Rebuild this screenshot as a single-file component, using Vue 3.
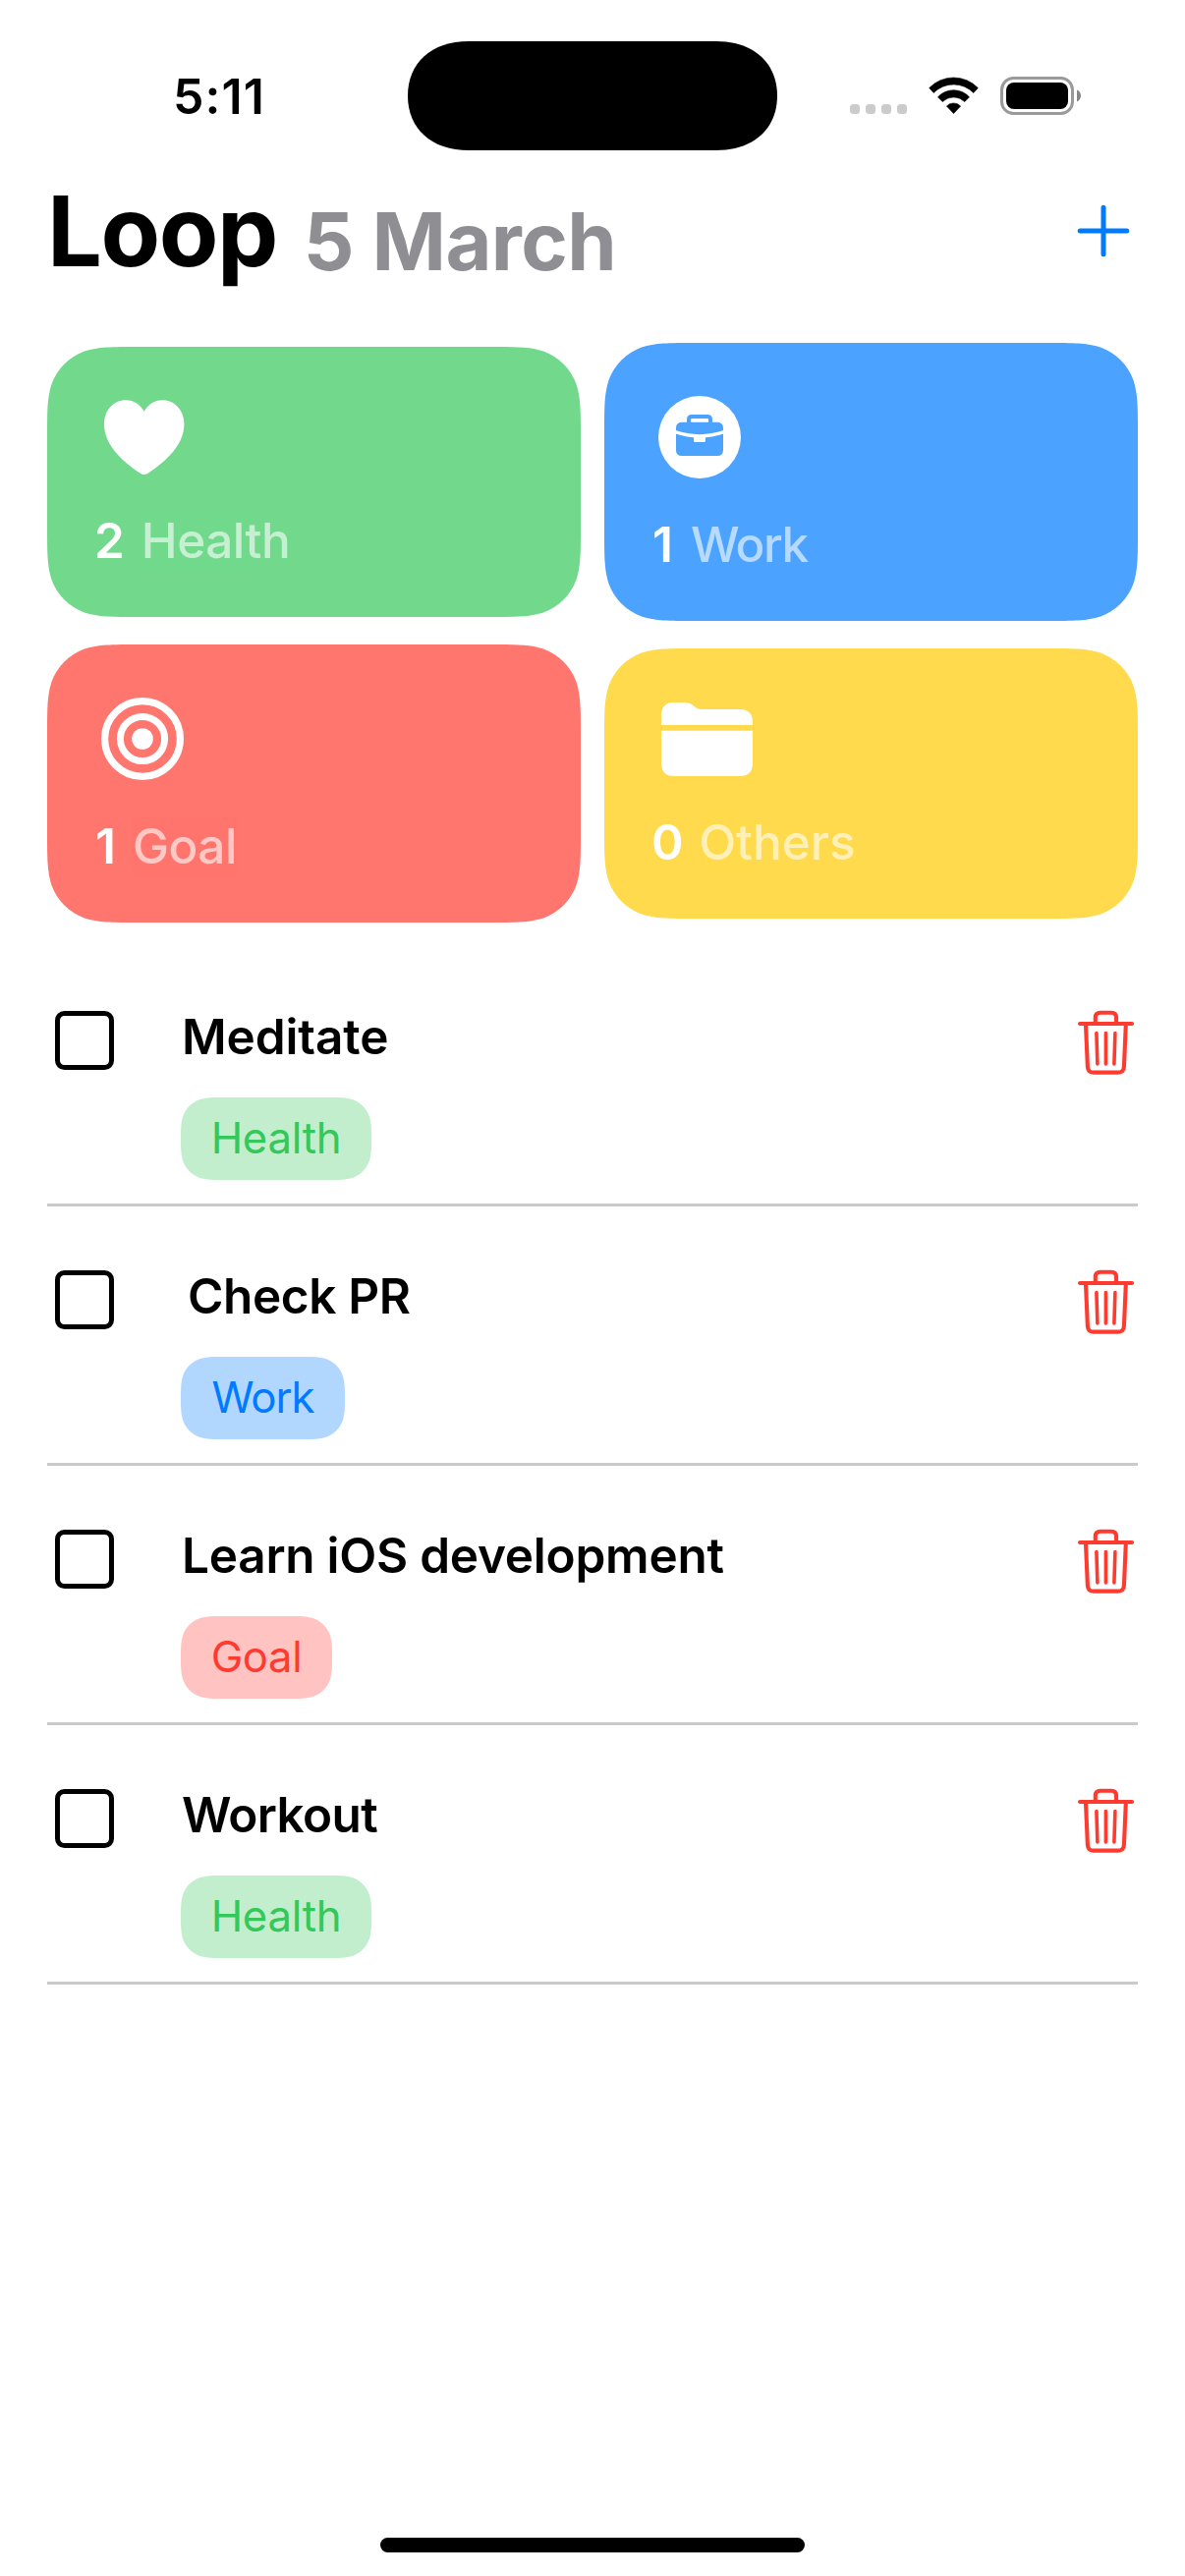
<script setup>
// Rounded rectangle with continuous (smoothed) corners, as a CSS clip path.
function smoothRect(w, h, r) {
  const x = (k) => Math.min(k * r, w / 2)
  const y = (k) => Math.min(k * r, h / 2)
  const a = 1.5287, b = 1.0885, c = 0.8684, d = 0.6315, e = 0.0749, f = 0.3728, g = 0.1691
  const outline =
    `M${x(a)} 0 H${w - x(a)} ` +
    `C${w - x(b)} 0 ${w - x(c)} 0 ${w - x(d)} ${y(e)} ` +
    `C${w - x(f)} ${y(g)} ${w - x(g)} ${y(f)} ${w - x(e)} ${y(d)} ` +
    `C${w} ${y(c)} ${w} ${y(b)} ${w} ${y(a)} ` +
    `V${h - y(a)} ` +
    `C${w} ${h - y(b)} ${w} ${h - y(c)} ${w - x(e)} ${h - y(d)} ` +
    `C${w - x(g)} ${h - y(f)} ${w - x(f)} ${h - y(g)} ${w - x(d)} ${h - y(e)} ` +
    `C${w - x(c)} ${h} ${w - x(b)} ${h} ${w - x(a)} ${h} ` +
    `H${x(a)} ` +
    `C${x(b)} ${h} ${x(c)} ${h} ${x(d)} ${h - y(e)} ` +
    `C${x(f)} ${h - y(g)} ${x(g)} ${h - y(f)} ${x(e)} ${h - y(d)} ` +
    `C0 ${h - y(c)} 0 ${h - y(b)} 0 ${h - y(a)} ` +
    `V${y(a)} ` +
    `C0 ${y(b)} 0 ${y(c)} ${x(e)} ${y(d)} ` +
    `C${x(g)} ${y(f)} ${x(f)} ${y(g)} ${x(d)} ${y(e)} ` +
    `C${x(c)} 0 ${x(b)} 0 ${x(a)} 0 Z`
  return `path("${outline}")`
}

const categories = [
  { key: 'health', label: 'Health', count: 2, height: 275 },
  { key: 'work', label: 'Work', count: 1, height: 283 },
  { key: 'goal', label: 'Goal', count: 1, height: 283 },
  { key: 'others', label: 'Others', count: 0, height: 275 },
]

const tagWidths = { health: 194, work: 167, goal: 154 }

const tasks = [
  { id: 'meditate', title: 'Meditate', category: 'health', label: 'Health' },
  { id: 'review', title: 'Check PR', category: 'work', label: 'Work' },
  { id: 'learn', title: 'Learn iOS development', category: 'goal', label: 'Goal' },
  { id: 'workout', title: 'Workout', category: 'health', label: 'Health' },
]
</script>

<template>
  <div class="screen">
    <div class="status">
      <div class="status-left"><span class="time">5:11</span></div>
      <svg class="island" width="376" height="111" viewBox="0 0 376 111">
        <path d="M62 0H314C352 0 376 22 376 55.5S352 111 314 111H62C24 111 0 89 0 55.5S24 0 62 0Z" />
      </svg>
      <div class="status-right">
        <svg width="58" height="40" viewBox="0 0 58 40" fill="#cbcbcb">
          <rect x="0" y="28" width="10" height="10" rx="3.5" />
          <rect x="16" y="28" width="10" height="10" rx="3.5" />
          <rect x="32" y="28" width="10" height="10" rx="3.5" />
          <rect x="48" y="28" width="10" height="10" rx="3.5" />
        </svg>
        <svg class="wifi" width="52" height="40" viewBox="0 0 52 40">
          <path d="M.7 11.5A34.5 34.5 0 0 1 50.3 11.5L45.8 16.5A28.5 28.5 0 0 0 5.2 16.5Z" />
          <path d="M9.5 20.8A21.6 21.6 0 0 1 41.5 20.8L36.8 25.6A16 16 0 0 0 14.2 25.6Z" />
          <path d="M18.4 30A9.8 9.8 0 0 1 32.6 30L25.5 37.6Z" />
        </svg>
        <svg class="battery" width="84" height="40" viewBox="0 0 84 40">
          <rect x="2.5" y="1.5" width="72" height="36" rx="12" fill="none" stroke="#9a9a9a" stroke-width="3" />
          <rect x="7" y="6" width="63" height="27" rx="8" />
          <path d="M79 13.4C81.6 14.6 83 16.8 83 19.4S81.6 24.2 79 25.4Z" fill="#858585" />
        </svg>
      </div>
    </div>

    <header class="header">
      <h1 class="title">Loop</h1>
      <h2 class="date">5 March</h2>
      <svg class="add" width="54" height="54" viewBox="0 0 54 54">
        <path d="M27 3.2V50.8M3.2 27H50.8" />
      </svg>
    </header>

    <section class="cards">
      <article
        v-for="c in categories"
        :key="c.key"
        class="card"
        :class="c.key"
        :style="{ height: c.height + 'px', clipPath: smoothRect(543, c.height, 60) }"
      >
        <svg class="card-icon" width="108" height="96" viewBox="0 0 108 96" fill="#fff">
          <path
            v-if="c.key === 'health'"
            d="M50.7 17.7C46.7 10.8 39.8 6.3 32.3 6.3C19.5 6.3 10 16.8 10 30.7C10 51 27 67.5 46.8 80.8Q50.7 83.3 54.6 80.8C74.4 67.5 91.4 51 91.4 30.7C91.4 16.8 81.9 6.3 69.1 6.3C61.6 6.3 54.7 10.8 50.7 17.7Z"
          />
          <g v-else-if="c.key === 'work'">
            <circle cx="49" cy="48" r="42" />
            <path d="M38 34V30Q38 27 41 27H57Q60 27 60 30V34" fill="none" stroke="#4ca2ff" stroke-width="4" />
            <rect x="25" y="32.7" width="48" height="34.3" rx="5.5" fill="#4ca2ff" />
            <path d="M24 42.7Q49 51 74 42.7" fill="none" stroke="#fff" stroke-width="3.4" />
            <rect x="43" y="46" width="12" height="7" rx="1.6" />
          </g>
          <g v-else-if="c.key === 'goal'">
            <circle cx="49" cy="48" r="38.4" fill="none" stroke="#fff" stroke-width="7.2" />
            <circle cx="49" cy="48" r="22.6" fill="none" stroke="#fff" stroke-width="7" />
            <circle cx="49" cy="48" r="10.8" />
          </g>
          <g v-else>
            <path d="M10 30V20C10 11.5 14.5 7 23 7H33.5C38 7 40.3 8.2 43 10.5C46 13 47.5 14 51 14H90C98.5 14 103 18.5 103 27V30Z" />
            <path d="M10 35.7H103V69C103 77.5 98.5 82 90 82H23C14.5 82 10 77.5 10 69Z" />
          </g>
        </svg>
        <p class="card-text">
          <span class="count">{{ c.count }}</span>
          <span class="name">{{ c.label }}</span>
        </p>
      </article>
    </section>

    <ul class="tasks">
      <li v-for="t in tasks" :key="t.id" class="task" :class="t.id">
        <span class="checkbox"></span>
        <div class="task-body">
          <p class="task-title">{{ t.title }}</p>
          <span
            class="tag"
            :class="'tag-' + t.category"
            :style="{ width: tagWidths[t.category] + 'px', clipPath: smoothRect(tagWidths[t.category], 84, 30) }"
            >{{ t.label }}</span
          >
        </div>
        <svg class="trash" width="62" height="70" viewBox="0 0 62 70">
          <path d="M4 16H57M19.8 15V9.6Q19.8 4.8 24.6 4.8H36.2Q41 4.8 41 9.6V15M10 17L11.9 60Q12.2 65.6 17.9 65.6H42.9Q48.6 65.6 48.9 60L50.8 17" stroke-width="4.1" />
          <path d="M20.9 25.6L21.9 57M30.4 25.6V57M39.9 25.6L38.9 57" stroke-width="3.6" />
        </svg>
      </li>
    </ul>

    <div class="home"></div>
  </div>
</template>

<style>
body {
  margin: 0;
  background: #fff;
}
</style>

<style scoped>
.screen {
  width: 1206px;
  height: 2622px;
  display: flex;
  flex-direction: column;
  background: #fff;
  color: #000;
  font-family: Inter, "Liberation Sans", sans-serif;
  overflow: hidden;
}
p, h1, h2, ul {
  margin: 0;
  padding: 0;
}
svg {
  display: block;
  flex: none;
}
.status {
  box-sizing: border-box;
  height: 175px;
  padding-top: 41.5px;
  display: flex;
  align-items: flex-start;
}
.status-left,
.status-right {
  box-sizing: border-box;
  flex: none;
  width: 415px;
  display: flex;
}
.time {
  margin: 26.3px 0 0 176px;
  font-size: 50px;
  line-height: 60px;
  font-weight: 600;
  letter-spacing: 1.1px;
}
.status-right {
  padding: 36.5px 0 0 74px;
}
.wifi {
  margin-left: 22px;
  stroke: #000;
  stroke-width: 0.6;
  stroke-linejoin: round;
}
.battery {
  margin-left: 20px;
}
.header {
  height: 174px;
  display: flex;
  align-items: flex-start;
  padding: 0 55.7px 0 48px;
}
.title {
  font-size: 99px;
  line-height: 120px;
  font-weight: 700;
  letter-spacing: -1.5px;
}
.date {
  margin: 10.5px 0 0 27px;
  font-size: 81px;
  line-height: 120px;
  font-weight: 700;
  letter-spacing: -0.6px;
  color: #8e8e93;
}
.add {
  margin: 32.8px 0 0 auto;
  fill: none;
  stroke: #007aff;
  stroke-width: 5;
  stroke-linecap: round;
}
.cards {
  display: grid;
  grid-template-columns: 543px 543px;
  grid-template-rows: 283px 283px;
  gap: 24px;
  align-items: center;
  padding: 0 48px;
}
.card {
  box-sizing: border-box;
  padding: 48px;
  display: flex;
  flex-direction: column;
  justify-content: space-between;
}
.health { background: #72d98c; }
.work { background: #4ca2ff; }
.goal { background: #ff766e; }
.others { background: #ffda4c; }
.card-text {
  display: flex;
  font-size: 49.5px;
  line-height: 60px;
  color: #fff;
}
.count {
  font-weight: 600;
}
.name {
  margin-left: 17px;
  font-weight: 500;
  letter-spacing: -0.5px;
  opacity: 0.6;
}
.work .name {
  margin-left: 19px;
  letter-spacing: -1.5px;
}
.goal .name {
  margin-left: 18px;
}
.others .name {
  margin-left: 15.5px;
  letter-spacing: 0;
}
.work .count,
.goal .count {
  padding-left: 1px;
  margin-right: -1px;
}
.tasks {
  margin: 25px 48px 0;
  list-style: none;
}
.task {
  box-sizing: border-box;
  height: 264px;
  display: flex;
  align-items: flex-start;
  border-bottom: 3px solid #cacaca;
}
.checkbox {
  box-sizing: border-box;
  flex: none;
  width: 60px;
  height: 60px;
  margin: 65px 68px 0 8px;
  border: 5px solid #000;
  border-radius: 9.5px;
}
.task-body {
  flex: 1;
  padding-top: 61px;
}
.task-title {
  margin-left: 1px;
  font-size: 49.5px;
  line-height: 60px;
  font-weight: 600;
  letter-spacing: -0.1px;
}
.review .task-title {
  margin-left: 7px;
  letter-spacing: -0.4px;
}
.learn .task-title {
  letter-spacing: -0.25px;
}
.workout .task-title {
  letter-spacing: -0.65px;
}
.tag {
  display: block;
  height: 84px;
  margin-top: 32px;
  font-size: 43.7px;
  line-height: 84px;
  text-align: center;
  letter-spacing: -0.25px;
}
.tag-health {
  background: #c2eecd;
  color: #34c759;
}
.tag-work {
  background: #b2d7ff;
  color: #007aff;
  letter-spacing: -1px;
}
.tag-goal {
  background: #ffc4c1;
  color: #ff3b30;
  letter-spacing: -0.4px;
}
.trash {
  margin: 62px 1px 0 0;
  fill: none;
  stroke: #ff3b30;
  stroke-linecap: round;
}
.home {
  width: 432px;
  height: 15px;
  margin: auto auto 24px;
  border-radius: 8px;
  background: #000;
}
</style>
